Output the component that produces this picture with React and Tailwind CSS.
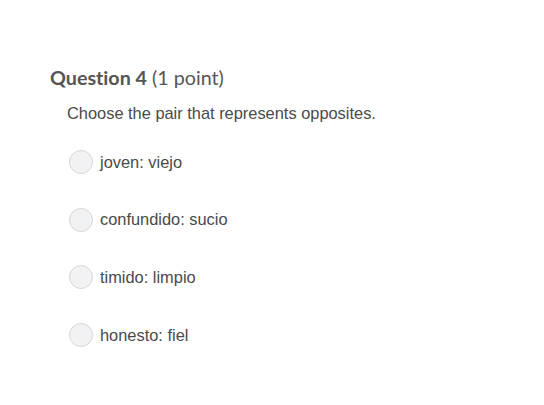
const options = ['joven: viejo', 'confundido: sucio', 'timido: limpio', 'honesto: fiel']

function Radio() {
  return (
    <span className="block w-6 h-6 rounded-full border border-[#d4d6d9] bg-[#f1f2f4] shrink-0" />
  )
}

export default function App() {
  return (
    <div className="w-[544px] h-[405px] bg-white pt-[66px] pl-[50px]">
      <h2 className="font-['Lato',sans-serif] text-[19.7px] leading-[24px] text-[#555] [font-variant-ligatures:none]">
        <span className="font-bold">Question 4</span> (1 point)
      </h2>
      <div className="pl-[17px] pt-[13px] font-['Liberation_Sans',Arial,sans-serif] text-[#4a4a4a]">
        <p className="text-[16.4px] leading-[20px]">Choose the pair that represents opposites.</p>
        <div className="flex flex-col gap-[33.7px] pt-[27px] pl-[2px]">
          {options.map((o) => (
            <label key={o} className="flex items-center gap-[7px] h-6 text-[16.4px]">
              <Radio />
              <span>{o}</span>
            </label>
          ))}
        </div>
      </div>
    </div>
  )
}
